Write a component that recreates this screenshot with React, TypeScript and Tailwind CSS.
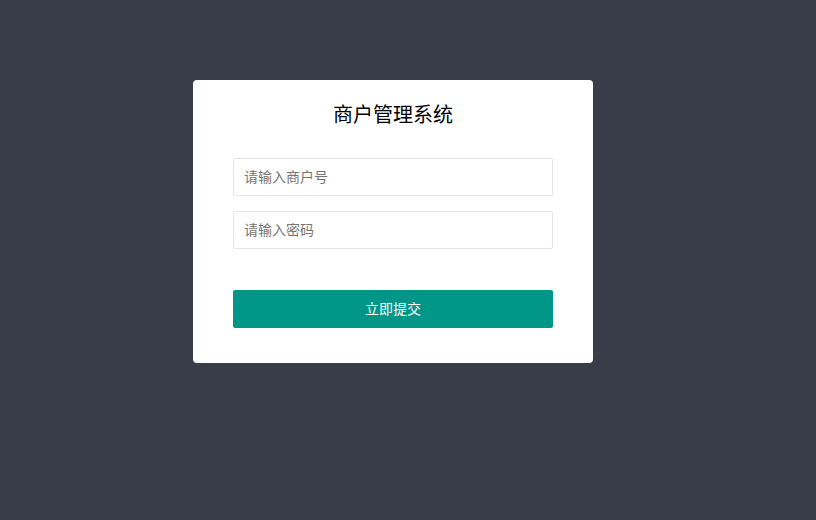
export default function App() {
  return (
    <div
      className="min-h-screen w-full bg-[#393d49] pt-[80px] pl-[193px]"
      style={{ fontFamily: '"Liberation Sans", "Noto Sans CJK SC", sans-serif' }}
    >
      <div className="w-[400px] rounded-[4px] bg-white px-[40px] pt-[20px] pb-[35px]">
        <h2 className="h-[30px] text-center text-[20px] leading-[30px] text-[#000]">商户管理系统</h2>
        <form className="mt-[28px] flex flex-col" onSubmit={(e) => e.preventDefault()}>
          <input
            type="text"
            placeholder="请输入商户号"
            className="h-[38px] w-full rounded-[2px] border border-[#e6e6e6] bg-white px-[10px] text-[14px] text-[#333] outline-none placeholder:text-[#757575]"
          />
          <input
            type="password"
            placeholder="请输入密码"
            className="mt-[15px] h-[38px] w-full rounded-[2px] border border-[#e6e6e6] bg-white px-[10px] text-[14px] text-[#333] outline-none placeholder:text-[#757575]"
          />
          <button
            type="submit"
            className="mt-[41px] h-[38px] w-full rounded-[2px] bg-[#009688] text-[14px] text-white"
          >
            立即提交
          </button>
        </form>
      </div>
    </div>
  );
}
